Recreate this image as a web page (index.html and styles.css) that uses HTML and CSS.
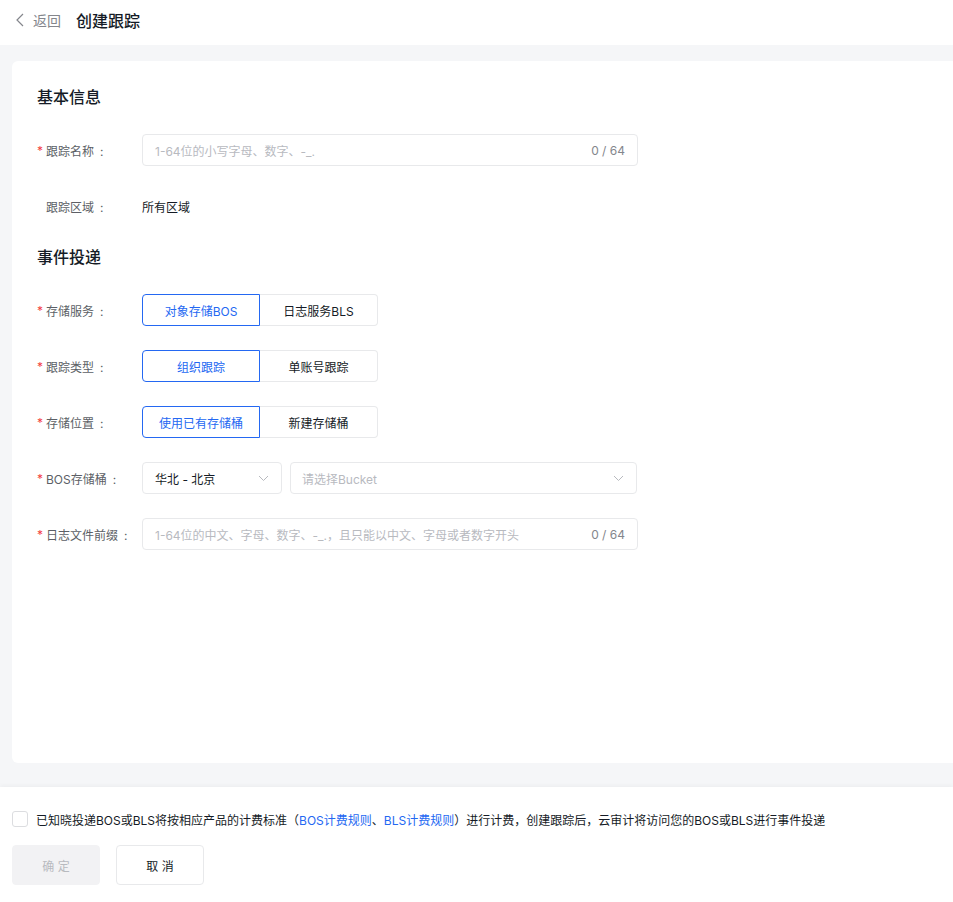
FILE: index.html
```html
<!DOCTYPE html>
<html>
    <head lang="zh">
        <meta charset="UTF-8">
        <title>创建跟踪</title>
        <link rel="stylesheet" href="styles.css">
    </head>
    <body>
    <div id="header">
        <span class="back">
            <svg width="10" height="14" viewBox="0 0 10 14"><path d="M8 1 L2 7 L8 13" fill="none" stroke="#84868c" stroke-width="1.2"/></svg>
            返回
        </span>
        <span class="title">创建跟踪</span>
    </div>
    <div id="main">
        <div class="card">
            <h2>基本信息</h2>
            <div class="row">
                <label class="req">跟踪名称<i>:</i></label>
                <div class="input wide">
                    <span class="ph">1-64位的小写字母、数字、-_.</span>
                    <span class="count">0 / 64</span>
                </div>
            </div>
            <div class="row">
                <label>跟踪区域<i>:</i></label>
                <span class="text">所有区域</span>
            </div>
            <h2 class="second">事件投递</h2>
            <div class="row">
                <label class="req">存储服务<i>:</i></label>
                <div class="radios">
                    <span class="selected">对象存储BOS</span>
                    <span>日志服务BLS</span>
                </div>
            </div>
            <div class="row">
                <label class="req">跟踪类型<i>:</i></label>
                <div class="radios">
                    <span class="selected">组织跟踪</span>
                    <span>单账号跟踪</span>
                </div>
            </div>
            <div class="row">
                <label class="req">存储位置<i>:</i></label>
                <div class="radios">
                    <span class="selected">使用已有存储桶</span>
                    <span>新建存储桶</span>
                </div>
            </div>
            <div class="row">
                <label class="req">BOS存储桶<i>:</i></label>
                <div class="input region">
                    <span>华北 - 北京</span>
                    <svg width="11" height="7" viewBox="0 0 11 7"><path d="M1 1 L5.5 5.5 L10 1" fill="none" stroke="#b8babf" stroke-width="1"/></svg>
                </div>
                <div class="input bucket">
                    <span class="ph">请选择Bucket</span>
                    <svg width="11" height="7" viewBox="0 0 11 7"><path d="M1 1 L5.5 5.5 L10 1" fill="none" stroke="#b8babf" stroke-width="1"/></svg>
                </div>
            </div>
            <div class="row">
                <label class="req">日志文件前缀<i>:</i></label>
                <div class="input wide">
                    <span class="ph">1-64位的中文、字母、数字、-_.，且只能以中文、字母或者数字开头</span>
                    <span class="count">0 / 64</span>
                </div>
            </div>
        </div>
    </div>
    <div id="footer">
        <div class="agree">
            <span class="checkbox"></span>
            <span>已知晓投递BOS或BLS将按相应产品的计费标准（<a>BOS计费规则</a>、<a>BLS计费规则</a>）进行计费，创建跟踪后，云审计将访问您的BOS或BLS进行事件投递</span>
        </div>
        <div class="btns">
            <span class="btn disabled">确 定</span>
            <span class="btn">取 消</span>
        </div>
    </div>
    </body>
</html>
```

FILE: styles.css
```css
*{
    margin:0;
    padding:0;
    box-sizing:border-box;
}
body{
    width:953px;
    height:902px;
    overflow:hidden;
    background:#f5f6f8;
    font-family:"Inter","Noto Sans CJK SC",sans-serif;
    font-size:12px;
    color:#151b26;
}
#header{
    height:45px;
    background:#fff;
    display:flex;
    align-items:center;
    padding:0 0 5px 15px;
}
#header .back{
    display:flex;
    align-items:center;
    gap:8px;
    color:#84868c;
    font-size:14px;
}
#header .title{
    margin-left:15px;
    font-size:16px;
    font-weight:500;
}
#main{
    padding:16px 0 24px 12px;
}
.card{
    height:702px;
    background:#fff;
    border-radius:6px 0 0 6px;
    padding:25px 25px;
}
.card h2{
    font-size:16px;
    font-weight:500;
    line-height:22px;
    margin-bottom:26px;
}
.card h2.second{
    margin-top:2px;
}
.row{
    display:flex;
    align-items:center;
    height:32px;
    margin-bottom:24px;
}
.row label{
    width:105px;
    flex:none;
    padding-left:9px;
    color:#5c5f66;
    position:relative;
}
.row label i{
    font-style:normal;
    margin-left:6px;
}
.row label.req:before{
    content:"*";
    color:#f33e3e;
    position:absolute;
    left:0;
    top:1px;
}
.text{
    color:#151b26;
}
.input{
    height:32px;
    border:1px solid #e8e9eb;
    border-radius:4px;
    display:flex;
    align-items:center;
    justify-content:space-between;
    padding:0 12px;
}
.wide{
    width:496px;
}
.ph{
    color:#b8babf;
}
.count{
    color:#84868c;
}
.region{
    width:140px;
    font-size:12px;
    padding-right:12px;
}
.bucket{
    width:347px;
    margin-left:8px;
    padding-left:11px;
}
.radios{
    display:flex;
}
.radios span{
    width:118px;
    height:32px;
    display:flex;
    align-items:center;
    justify-content:center;
    border:1px solid #e8e9eb;
    color:#151b26;
}
.radios span:first-child{
    border-radius:4px 0 0 4px;
}
.radios span:last-child{
    border-left:none;
    border-radius:0 4px 4px 0;
}
.radios .selected{
    border-color:#2468f2;
    color:#2468f2;
}
#footer{
    height:115px;
    background:#fff;
    box-shadow:0 -2px 4px rgba(0,0,0,0.03);
    padding:24px 12px 0;
}
.agree{
    display:flex;
    align-items:center;
    gap:8px;
    height:16px;
}
.checkbox{
    width:16px;
    height:16px;
    border:1px solid #dcdde0;
    border-radius:3px;
}
.agree a{
    color:#2468f2;
}
.btns{
    display:flex;
    gap:16px;
    margin-top:18px;
}
.btn{
    width:88px;
    height:40px;
    display:flex;
    align-items:center;
    justify-content:center;
    border:1px solid #e8e9eb;
    border-radius:4px;
    font-size:12px;
}
.btn.disabled{
    background:#f2f2f4;
    border-color:#f2f2f4;
    color:#b8babf;
}
```
